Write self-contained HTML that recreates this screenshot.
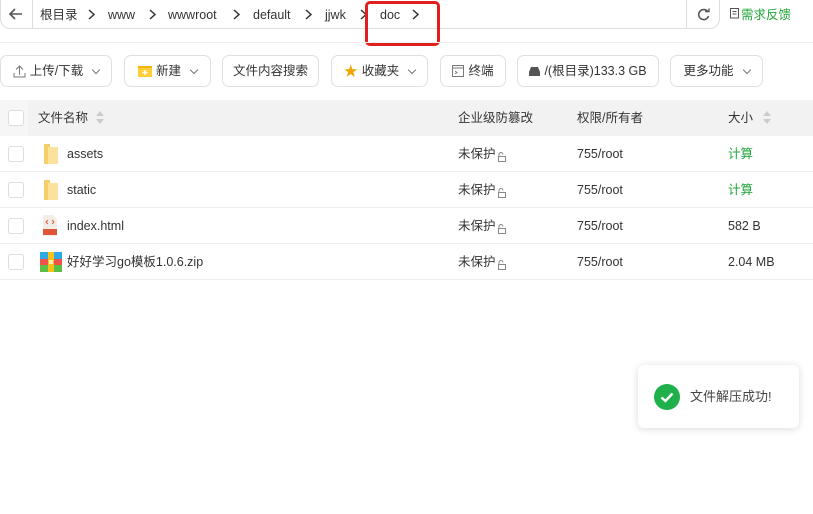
<!DOCTYPE html>
<html><head><meta charset="utf-8"><style>
*{box-sizing:border-box;margin:0;padding:0}
body{width:813px;height:514px;background:#fff;font-family:"Liberation Sans","Noto Sans CJK SC",sans-serif;font-size:12.5px;line-height:16px;color:#333;position:relative;overflow:hidden}
.abs{position:absolute}
.crumb{left:0;top:0;width:720px;height:29px;border:1px solid #ddd;border-top:none;border-radius:0 0 10px 10px;background:#fff}
.t{position:absolute;white-space:nowrap;line-height:16px;height:16px}
.btn{position:absolute;top:55px;height:32px;border:1px solid #e0e0e0;border-radius:7px;background:#fff;display:flex;align-items:center;justify-content:center;gap:4px;font-size:12.5px;line-height:16px;color:#333}
.chev{width:6px;height:6px;border-right:1px solid #777;border-bottom:1px solid #777;transform:rotate(45deg);margin:-3px 0 0 6px}
.row{position:absolute;left:0;width:813px;height:36px;border-bottom:1px solid #eee}
.cb{position:absolute;left:8px;width:16px;height:16px;border:1px solid #ddd;border-radius:3px;background:#fff}
.lk{display:inline-block;vertical-align:-4px;margin-left:1px}
</style></head><body>
<div class="abs crumb"></div>
<div class="abs" style="left:32px;top:0;width:1px;height:28px;background:#ddd"></div>
<div class="abs" style="left:686px;top:0;width:1px;height:28px;background:#ddd"></div>
<svg class="abs" style="left:9px;top:8px" width="14" height="12"><path d="M13 6H2M6 1L1 6l5 5" stroke="#555" stroke-width="1.6" fill="none"/></svg>
<span class="t" style="left:40px;top:7px">根目录</span>
<svg class="abs" style="left:88px;top:9px" width="8" height="11"><path d="M1 1l5 4.5L1 10" stroke="#333" stroke-width="1.5" fill="none"/></svg>
<span class="t" style="left:108px;top:7px">www</span>
<svg class="abs" style="left:149px;top:9px" width="8" height="11"><path d="M1 1l5 4.5L1 10" stroke="#333" stroke-width="1.5" fill="none"/></svg>
<span class="t" style="left:168px;top:7px">wwwroot</span>
<svg class="abs" style="left:233px;top:9px" width="8" height="11"><path d="M1 1l5 4.5L1 10" stroke="#333" stroke-width="1.5" fill="none"/></svg>
<span class="t" style="left:253px;top:7px">default</span>
<svg class="abs" style="left:305px;top:9px" width="8" height="11"><path d="M1 1l5 4.5L1 10" stroke="#333" stroke-width="1.5" fill="none"/></svg>
<span class="t" style="left:325px;top:7px">jjwk</span>
<svg class="abs" style="left:360px;top:9px" width="8" height="11"><path d="M1 1l5 4.5L1 10" stroke="#333" stroke-width="1.5" fill="none"/></svg>
<span class="t" style="left:380px;top:7px">doc</span>
<svg class="abs" style="left:412px;top:9px" width="8" height="11"><path d="M1 1l5 4.5L1 10" stroke="#333" stroke-width="1.5" fill="none"/></svg>
<div class="abs" style="left:365px;top:1px;width:75px;height:45px;border:3px solid #e0201c;border-radius:5px"></div>
<svg class="abs" style="left:697px;top:8px" width="13" height="13"><path d="M11 4A5 5 0 1 0 11.5 8" stroke="#555" stroke-width="1.6" fill="none"/><path d="M8 3.5h4v-3" stroke="#555" stroke-width="1.4" fill="none"/></svg>
<svg class="abs" style="left:730px;top:8px" width="10" height="11"><rect x="0.5" y="0.5" width="8" height="9.5" stroke="#555" fill="none"/><path d="M2.5 3.5h4M2.5 6h4" stroke="#555"/></svg>
<span class="t" style="left:741px;top:7px;color:#20a53a">需求反馈</span>
<div class="abs" style="left:0;top:42px;width:813px;height:1px;background:#eee"></div>

<div class="btn" style="left:0;width:112px"><svg width="13" height="13"><path d="M1 8v4h11V8M6.5 10V1M3 4.5l3.5-3.5 3.5 3.5" stroke="#777" fill="none"/></svg>上传/下载<span class="chev"></span></div>
<div class="btn" style="left:124px;width:87px"><svg width="14" height="12"><rect x="0" y="1" width="14" height="11" fill="#f4b400"/><rect x="0" y="3" width="14" height="9" fill="#ffcf3a"/><path d="M7 5v5M4.5 7.5h5" stroke="#fff" stroke-width="1.4"/></svg>新建<span class="chev"></span></div>
<div class="btn" style="left:222px;width:97px">文件内容搜索</div>
<div class="btn" style="left:331px;width:97px"><span style="color:#f0a500;font-size:14px">★</span>收藏夹<span class="chev"></span></div>
<div class="btn" style="left:440px;width:66px"><svg width="12" height="12"><rect x="0.5" y="0.5" width="11" height="11" stroke="#777" fill="none"/><path d="M0.5 3h11M3 6l2 1.5L3 9" stroke="#777" fill="none"/></svg>终端</div>
<div class="btn" style="left:517px;width:142px"><svg width="11" height="9"><path d="M2 0h7l2 5v4H0V5z" fill="#555"/></svg>/(根目录)133.3 GB</div>
<div class="btn" style="left:670px;width:93px">更多功能<span class="chev"></span></div>

<div class="abs" style="left:0;top:100px;width:813px;height:36px;background:#f2f2f2"></div>
<div class="abs" style="left:0;top:100px;width:28px;height:36px;background:#f6f6f6"></div>
<div class="cb" style="top:110px"></div>
<span class="t" style="left:38px;top:110px">文件名称</span>
<svg class="abs" style="left:96px;top:111px" width="8" height="13"><path d="M4 0L8 5H0zM4 13L0 8h8z" fill="#ccc"/></svg>
<span class="t" style="left:458px;top:110px">企业级防篡改</span>
<span class="t" style="left:577px;top:110px">权限/所有者</span>
<span class="t" style="left:728px;top:110px">大小</span>
<svg class="abs" style="left:763px;top:111px" width="8" height="13"><path d="M4 0L8 5H0zM4 13L0 8h8z" fill="#ccc"/></svg>

<div class="row" style="top:136px"></div>
<div class="row" style="top:172px"></div>
<div class="row" style="top:208px"></div>
<div class="row" style="top:244px"></div>

<div class="cb" style="top:146px"></div><div class="cb" style="top:182px"></div><div class="cb" style="top:218px"></div><div class="cb" style="top:254px"></div>
<svg class="abs" style="left:42px;top:143px" width="18" height="22"><path d="M2 1h6v20H3q-1 0-1-1z" fill="#f5d06a"/><path d="M6 4h9q1 0 1 1v15q0 1-1 1H6z" fill="#fbe29a"/></svg>
<svg class="abs" style="left:42px;top:179px" width="18" height="22"><path d="M2 1h6v20H3q-1 0-1-1z" fill="#f5d06a"/><path d="M6 4h9q1 0 1 1v15q0 1-1 1H6z" fill="#fbe29a"/></svg>
<svg class="abs" style="left:42px;top:215px" width="16" height="21"><path d="M1 0h10l4 4v17H1z" fill="#f3ede8"/><path d="M6 5L4 7l2 2M10 5l2 2-2 2" stroke="#e06040" fill="none"/><rect x="1" y="14" width="14" height="6" fill="#e0553a"/></svg>
<svg class="abs" style="left:40px;top:252px" width="22" height="20"><rect x="0" y="0" width="22" height="7" fill="#2fa8e8"/><rect x="0" y="7" width="22" height="6" fill="#f0524a"/><rect x="0" y="13" width="22" height="7" fill="#5bbf45"/><rect x="8" y="0" width="6" height="20" fill="#f7c21a"/><rect x="9" y="8" width="4" height="4" fill="#fff" opacity=".7"/></svg>
<span class="t" style="left:67px;top:146px">assets</span>
<span class="t" style="left:67px;top:182px">static</span>
<span class="t" style="left:67px;top:218px">index.html</span>
<span class="t" style="left:67px;top:254px">好好学习go模板1.0.6.zip</span>

<span class="t" style="left:458px;top:146px">未保护<svg class="lk" width="10" height="10"><path d="M2 4V2.5a2 2 0 0 1 4 0" stroke="#888" fill="none"/><rect x="1.5" y="4.5" width="7" height="5" stroke="#888" fill="none"/></svg></span>
<span class="t" style="left:458px;top:182px">未保护<svg class="lk" width="10" height="10"><path d="M2 4V2.5a2 2 0 0 1 4 0" stroke="#888" fill="none"/><rect x="1.5" y="4.5" width="7" height="5" stroke="#888" fill="none"/></svg></span>
<span class="t" style="left:458px;top:218px">未保护<svg class="lk" width="10" height="10"><path d="M2 4V2.5a2 2 0 0 1 4 0" stroke="#888" fill="none"/><rect x="1.5" y="4.5" width="7" height="5" stroke="#888" fill="none"/></svg></span>
<span class="t" style="left:458px;top:254px">未保护<svg class="lk" width="10" height="10"><path d="M2 4V2.5a2 2 0 0 1 4 0" stroke="#888" fill="none"/><rect x="1.5" y="4.5" width="7" height="5" stroke="#888" fill="none"/></svg></span>
<span class="t" style="left:577px;top:146px">755/root</span>
<span class="t" style="left:577px;top:182px">755/root</span>
<span class="t" style="left:577px;top:218px">755/root</span>
<span class="t" style="left:577px;top:254px">755/root</span>
<span class="t" style="left:728px;top:146px;color:#20a53a">计算</span>
<span class="t" style="left:728px;top:182px;color:#20a53a">计算</span>
<span class="t" style="left:728px;top:218px">582 B</span>
<span class="t" style="left:728px;top:254px">2.04 MB</span>

<div class="abs" style="left:638px;top:365px;width:161px;height:63px;background:#fff;border-radius:6px;box-shadow:0 1px 8px rgba(0,0,0,.15)"></div>
<svg class="abs" style="left:654px;top:384px" width="26" height="26"><circle cx="13" cy="13" r="13" fill="#20b04b"/><path d="M7.5 13.5l4 3.5 7-7.5" stroke="#fff" stroke-width="2.4" fill="none"/></svg>
<span class="t" style="left:690px;top:389px;font-size:13px;color:#444">文件解压成功!</span>
</body></html>
